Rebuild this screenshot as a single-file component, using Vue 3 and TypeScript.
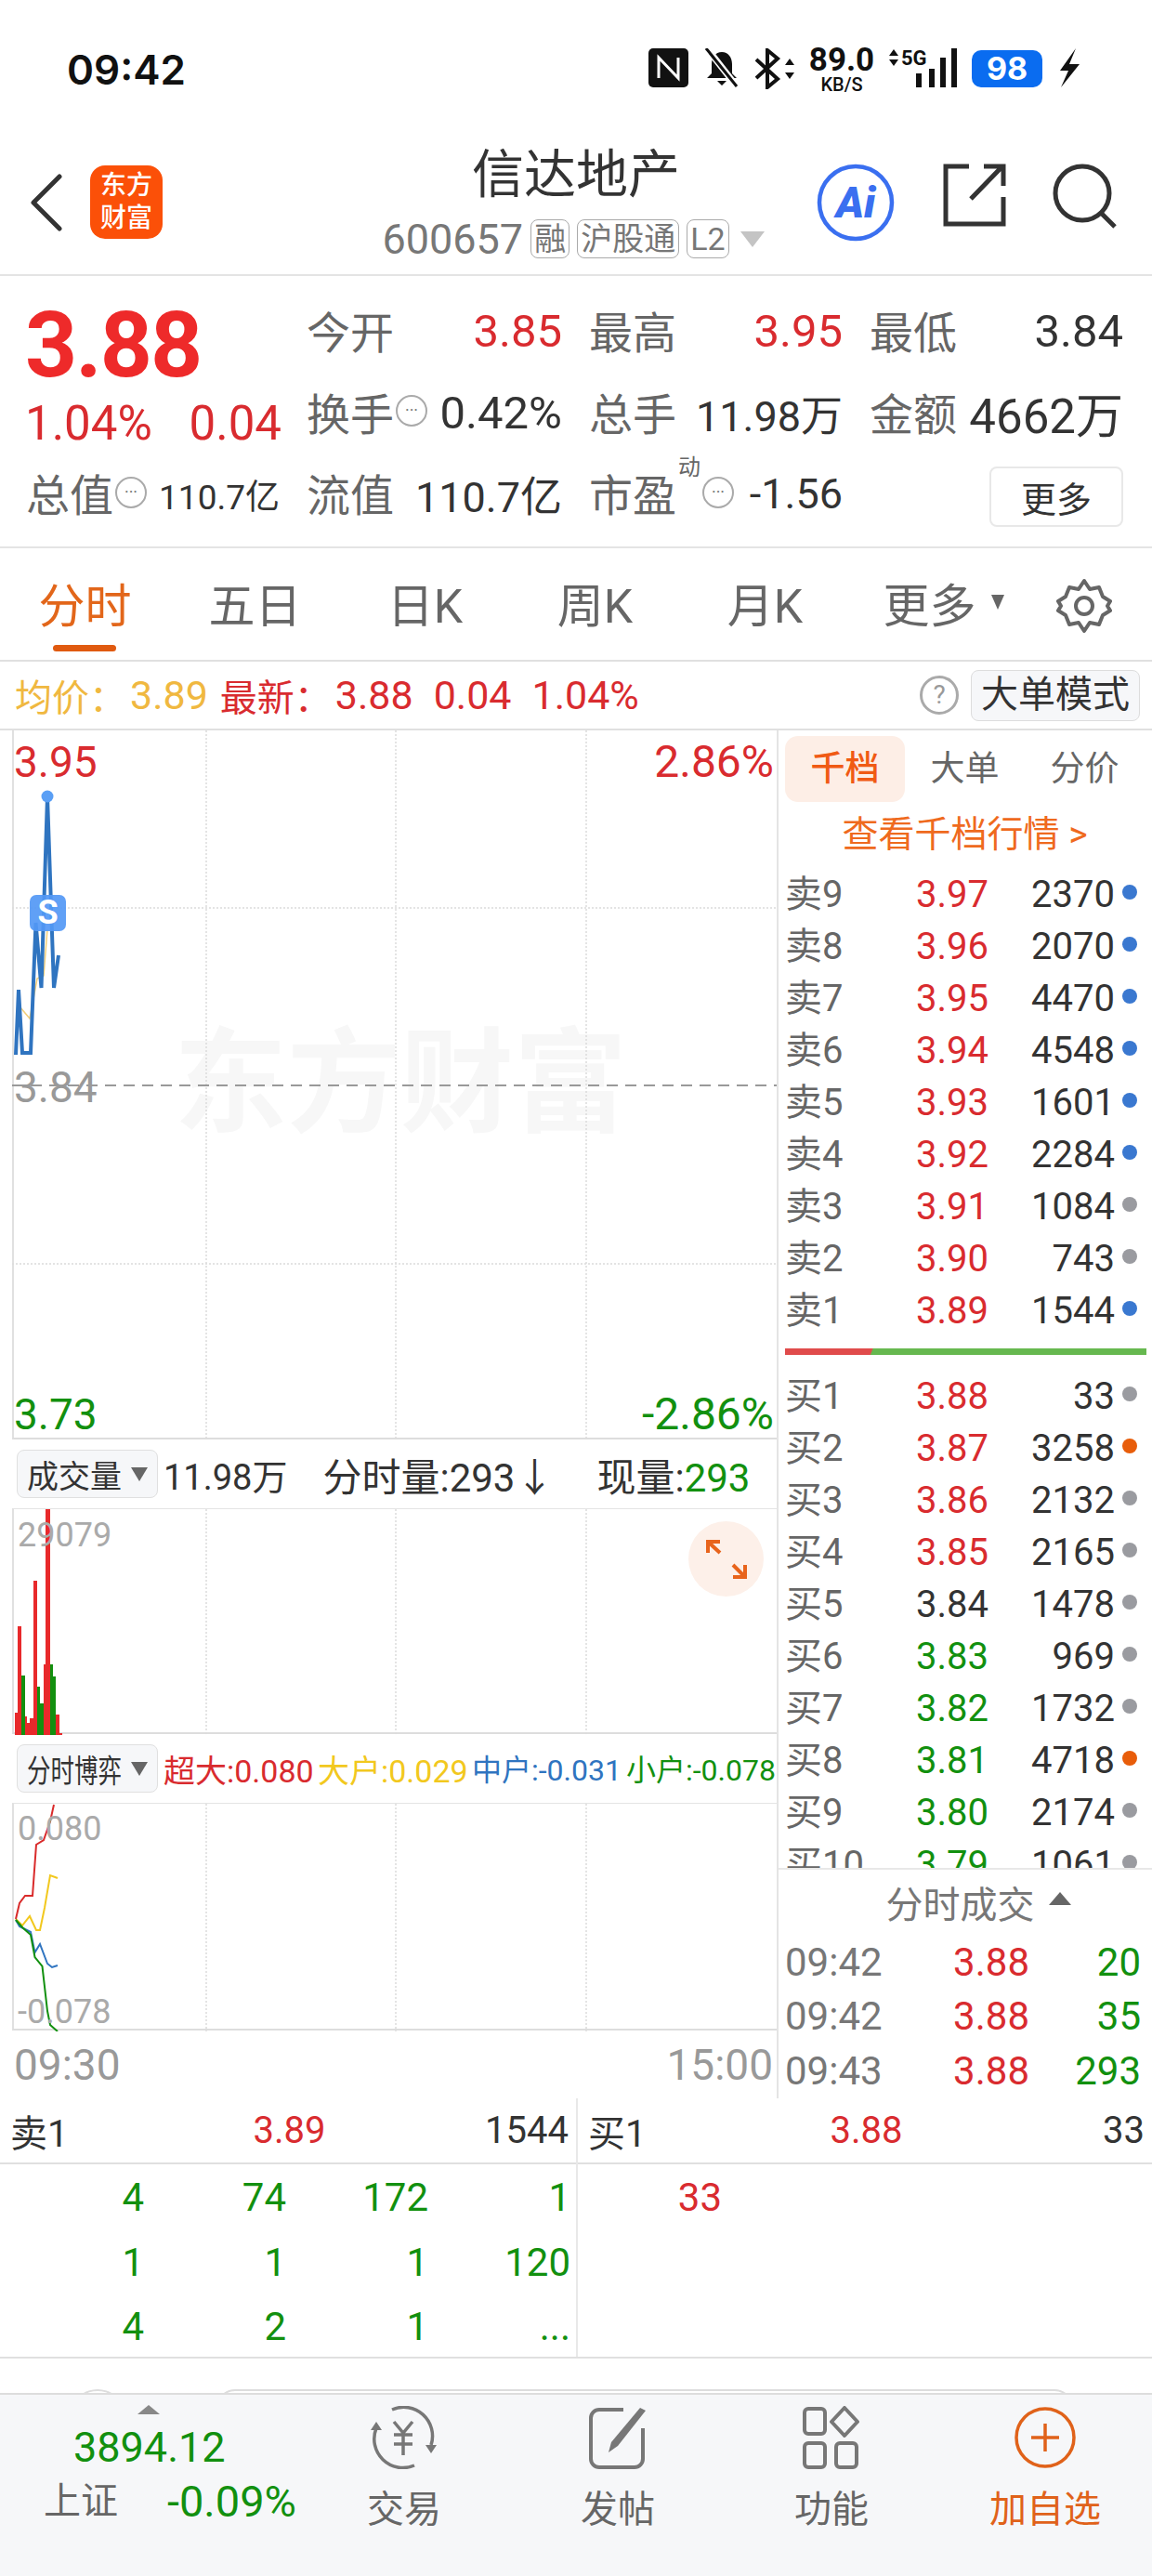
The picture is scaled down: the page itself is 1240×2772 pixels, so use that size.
<template>
  <div class="page">
    <div class="status">
      <span class="clock">09:42</span>
      <div class="status-icons">
        <svg width="43" height="42" viewBox="0 0 43 42"><rect width="43" height="42" rx="5" fill="#111" /><path d="M11 32V10l21 22V10" fill="none" stroke="#fff" stroke-width="3" /></svg>
        <svg width="40" height="42" viewBox="0 0 40 42"><path d="M20 4c-7 0-11 6-11 13v10l-5 5h32l-5-5V17c0-7-4-13-11-13zM15 35h10l-5 5z" fill="#111" /><path d="M4 0l32 41" stroke="#fff" stroke-width="7" /><path d="M3 0l33 41" stroke="#111" stroke-width="3" /></svg>
        <svg width="42" height="44" viewBox="0 0 42 44"><path d="M1 12l23 21-11 9V2l11 9L1 32" fill="none" stroke="#111" stroke-width="4" /><path d="M32 18l5-7 5 7zM32 26l5 7 5-7z" fill="#111" /></svg>
        <div class="speed"><b>89.0</b><small>KB/S</small></div>
        <svg width="73" height="42" viewBox="0 0 73 42"><path d="M0 8l5-7 5 7zM0 12l5 7 5-7z" fill="#111" /><text x="13" y="18" class="net">5G</text><rect x="29" y="27" width="6" height="15" fill="#111" /><rect x="43" y="22" width="6" height="20" fill="#111" /><rect x="55" y="10" width="6" height="32" fill="#111" /><rect x="67" y="0" width="6" height="42" fill="#111" /></svg>
        <div class="battery">98</div>
        <svg width="25" height="42" viewBox="0 0 25 42"><path d="M20 0L3 24h9L4 42l20-25H13z" fill="#111" /></svg>
      </div>
    </div>

    <header class="head">
      <div class="head-left">
        <svg width="35" height="62" viewBox="0 0 35 62"><path d="M32 3L4 31l28 28" fill="none" stroke="#333" stroke-width="5" stroke-linecap="round" stroke-linejoin="round" /></svg>
        <div class="logo">东方<br />财富</div>
      </div>
      <div class="head-mid">
        <div class="stock-name">信达地产</div>
        <div class="stock-sub">
          <span class="code">600657</span>
          <span class="tag">融</span>
          <span class="tag">沪股通</span>
          <span class="tag">L2</span>
          <i class="tri-down"></i>
        </div>
      </div>
      <div class="head-right">
        <svg width="84" height="84" viewBox="0 0 84 84"><circle cx="42" cy="42" r="39" fill="none" stroke="#3a6ff0" stroke-width="4.5" /><text x="42" y="58" text-anchor="middle" class="ai">Ai</text></svg>
        <svg width="68" height="68" viewBox="0 0 68 68"><path d="M28 3H3v62h62V36" fill="none" stroke="#333" stroke-width="5" /><path d="M30 38L63 4M44 3h21v21" fill="none" stroke="#333" stroke-width="5" /></svg>
        <svg width="70" height="70" viewBox="0 0 70 70"><circle cx="32" cy="32" r="29" fill="none" stroke="#333" stroke-width="5" /><path d="M52 53l15 15" stroke="#333" stroke-width="5" /></svg>
      </div>
    </header>

    <section class="quote">
      <div class="price-box">
        <div class="big-price">3.88</div>
        <div class="change"><span>1.04%</span><span>0.04</span></div>
      </div>
      <div class="cell"><span class="lbl">今开</span><span class="val red">3.85</span></div>
      <div class="cell"><span class="lbl">最高</span><span class="val red">3.95</span></div>
      <div class="cell"><span class="lbl">最低</span><span class="val">3.84</span></div>
      <div class="cell"><span class="lbl">换手<i class="dots"></i></span><span class="val">0.42%</span></div>
      <div class="cell"><span class="lbl">总手</span><span class="val mid">11.98万</span></div>
      <div class="cell"><span class="lbl">金额</span><span class="val big">4662万</span></div>
      <div class="cell"><span class="lbl">总值<i class="dots"></i></span><span class="val small">110.7亿</span></div>
      <div class="cell"><span class="lbl">流值</span><span class="val mid">110.7亿</span></div>
      <div class="cell"><span class="lbl">市盈<sup>动</sup><i class="dots"></i></span><span class="val mid">-1.56</span></div>
      <div class="cell end"><button class="more-btn">更多</button></div>
    </section>

    <nav class="tabs">
      <div v-for="(t, i) in periods" :key="t" :class="['tab', { active: i === 0, shifted: t === '更多' }]">
        {{ t }}<i v-if="t === '更多'" class="tri-small"></i>
      </div>
      <div class="tab gear">
        <svg width="60" height="60" viewBox="0 0 60 60"><path d="M30 3l6 9 10-2 4 10 8 5-3 5 3 5-8 5-4 10-10-2-6 9-6-9-10 2-4-10-8-5 3-5-3-5 8-5 4-10 10 2z" fill="none" stroke="#666" stroke-width="4" stroke-linejoin="round" /><circle cx="30" cy="30" r="9" fill="none" stroke="#666" stroke-width="4" /></svg>
      </div>
    </nav>

    <div class="info">
      <span class="yellow">均价：</span><span class="yellow num">3.89</span>
      <span class="red sp1">最新：</span><span class="red num">3.88</span>
      <span class="red sp2">0.04</span><span class="red sp2">1.04%</span>
      <span class="help">?</span>
      <button class="mode-btn">大单模式</button>
    </div>

    <div class="main">
      <div class="left">
        <div class="plot plot-price">
          <div class="watermark">东方财富</div>
          <svg width="824" height="763" viewBox="13 786 824 763">
            <path v-for="x in gridX" :key="x" :d="`M${x} 786V1549`" class="grid" />
            <path d="M13 977H836M13 1360H836" class="grid" />
            <path d="M13 1168H836" stroke="#999" stroke-width="2" stroke-dasharray="12 8" />
            <polyline points="21,1083 32,1096 40,1053 47,1050 51,1000" fill="none" stroke="#f3cf7a" stroke-width="1.5" />
            <polyline points="17,1135 20,1065 24,1133 33,1133 38.5,993 44.5,1063 51,857 58,1063 63,1028" fill="none" stroke="#2f74c0" stroke-width="4" />
            <circle cx="51" cy="857" r="6.5" fill="#5a9ff5" />
          </svg>
          <div class="sell-mark">S</div>
          <span class="mk tl red">3.95</span>
          <span class="mk tr red">2.86%</span>
          <span class="mk ml gray">3.84</span>
          <span class="mk bl green">3.73</span>
          <span class="mk br green">-2.86%</span>
        </div>

        <div class="bar-row">
          <div class="picker">成交量<i class="tri-down dark"></i></div>
          <span class="t-dark vol">11.98万</span>
          <span class="t-dark part">分时量:293↓</span>
          <span class="t-dark now">现量:<em class="green">293</em></span>
        </div>

        <div class="plot plot-vol">
          <svg width="824" height="243" viewBox="13 1624 824 243">
            <path v-for="x in gridX" :key="x" :d="`M${x} 1624V1867`" class="grid" />
            <rect v-for="b in volBars" :key="b.x" :x="b.x" :y="b.y" :width="b.w" :height="1867 - b.y" :fill="b.c" />
          </svg>
          <span class="mk-sm">29079</span>
          <div class="expand">
            <svg width="44" height="42" viewBox="0 0 44 42"><path d="M2 2L15 14M2 14V2h13M42 40L29 27M42 27v13H29" fill="none" stroke="#e8641c" stroke-width="4" /></svg>
          </div>
        </div>

        <div class="bar-row">
          <div class="picker"><span class="squeeze">分时博弈</span><i class="tri-down dark"></i></div>
          <div class="flows">
            <span class="red">超大:0.080</span>
            <span class="gold">大户:0.029</span>
            <span class="blue">中户:-0.031</span>
            <span class="green">小户:-0.078</span>
          </div>
        </div>

        <div class="plot plot-game">
          <svg width="824" height="245" viewBox="13 1941 824 245">
            <path v-for="x in gridX" :key="x" :d="`M${x} 1941V2186`" class="grid" />
            <polyline v-for="l in gameLines" :key="l.c" :points="l.p" fill="none" :stroke="l.c" stroke-width="2" />
          </svg>
          <span class="mk-sm top">0.080</span>
          <span class="mk-sm bottom">-0.078</span>
        </div>

        <div class="axis"><span>09:30</span><span>15:00</span></div>
      </div>

      <div class="right">
        <div class="book">
          <div class="book-tabs">
            <span class="on">千档</span><span>大单</span><span>分价</span>
          </div>
          <div class="book-link">查看千档行情 &gt;</div>
          <div v-for="r in sells" :key="r.l" class="book-row">
            <span class="b-l">{{ r.l }}</span>
            <span class="b-p" :class="r.cl">{{ r.p }}</span>
            <span class="b-q">{{ r.q }}</span>
            <i class="b-d" :class="r.d"></i>
          </div>
          <div class="ratio"></div>
          <div v-for="r in buys" :key="r.l" class="book-row">
            <span class="b-l">{{ r.l }}</span>
            <span class="b-p" :class="r.cl">{{ r.p }}</span>
            <span class="b-q">{{ r.q }}</span>
            <i class="b-d" :class="r.d"></i>
          </div>
        </div>
        <div class="trades">
          <div class="trades-head">分时成交<i class="tri-up"></i></div>
          <div v-for="(r, i) in trades" :key="i" class="trade">
            <span class="t-t">{{ r[0] }}</span>
            <span class="t-p red">{{ r[1] }}</span>
            <span class="t-v green">{{ r[2] }}</span>
          </div>
        </div>
      </div>
    </div>

    <div class="level">
      <div class="level-side">
        <div class="level-head">
          <span class="lh-l">卖1</span><span class="lh-p red">3.89</span><span class="lh-q">1544</span>
        </div>
        <div class="queue">
          <span v-for="(q, i) in sellQueue" :key="i" class="green">{{ q }}</span>
        </div>
      </div>
      <div class="level-side">
        <div class="level-head">
          <span class="lh-l">买1</span><span class="lh-p red">3.88</span><span class="lh-q">33</span>
        </div>
        <div class="queue">
          <span class="red">33</span>
        </div>
      </div>
    </div>

    <div class="peek">
      <i class="peek-dot"></i>
      <i class="peek-box"></i>
    </div>

    <footer class="tool">
      <div class="index">
        <i class="tri-up small"></i>
        <div class="index-val green">3894.12</div>
        <div class="index-row"><span>上证</span><span class="green pct">-0.09%</span></div>
      </div>
      <div class="tool-item">
        <svg width="76" height="68" viewBox="0 0 76 68"><path d="M25 4A31 31 0 0 1 67 42M49 64A31 31 0 0 1 8 24" fill="none" stroke="#777" stroke-width="3.5" /><path d="M61 42h12l-6 9zM2 26l6-9 6 9z" fill="#777" /><path d="M27 17l10 12 10-12M27 31h20M27 41h20M37 29v24" fill="none" stroke="#777" stroke-width="3.5" /></svg>
        <span>交易</span>
      </div>
      <div class="tool-item">
        <svg width="64" height="68" viewBox="0 0 64 68"><path d="M38 4H12a9 9 0 0 0-9 9v44a9 9 0 0 0 9 9h38a9 9 0 0 0 9-9V24" fill="none" stroke="#777" stroke-width="4" /><path d="M56 2l6 3-30 38-10 7 3-11z" fill="#777" /></svg>
        <span>发帖</span>
      </div>
      <div class="tool-item">
        <svg width="62" height="68" viewBox="0 0 62 68"><g fill="none" stroke="#777" stroke-width="4"><rect x="2" y="3" width="22" height="27" rx="4" /><path d="M45 2l14 15-14 15-14-15z" stroke-linejoin="round" /><rect x="2" y="40" width="22" height="26" rx="4" /><rect x="36" y="40" width="22" height="26" rx="4" /></g></svg>
        <span>功能</span>
      </div>
      <div class="tool-item on">
        <svg width="68" height="68" viewBox="0 0 68 68"><circle cx="34" cy="34" r="31" fill="none" stroke="#e0621a" stroke-width="3.5" /><path d="M34 19v30M19 34h30" stroke="#e0621a" stroke-width="3.5" /></svg>
        <span>加自选</span>
      </div>
    </footer>
  </div>
</template>

<script setup lang="ts">
interface BookRow {
  l: string;
  p: string;
  q: string;
  cl: string;
  d: string;
}

const periods = ['分时', '五日', '日K', '周K', '月K', '更多'];
const gridX = [222, 426, 631];

const mkRow = (l: string, p: string, q: string, d: string, cl = 'red'): BookRow => ({ l, p, q, d, cl });

const sells: BookRow[] = [
  mkRow('卖9', '3.97', '2370', 'blue-dot'),
  mkRow('卖8', '3.96', '2070', 'blue-dot'),
  mkRow('卖7', '3.95', '4470', 'blue-dot'),
  mkRow('卖6', '3.94', '4548', 'blue-dot'),
  mkRow('卖5', '3.93', '1601', 'blue-dot'),
  mkRow('卖4', '3.92', '2284', 'blue-dot'),
  mkRow('卖3', '3.91', '1084', 'gray-dot'),
  mkRow('卖2', '3.90', '743', 'gray-dot'),
  mkRow('卖1', '3.89', '1544', 'blue-dot'),
];

const buys: BookRow[] = [
  mkRow('买1', '3.88', '33', 'gray-dot'),
  mkRow('买2', '3.87', '3258', 'orange-dot'),
  mkRow('买3', '3.86', '2132', 'gray-dot'),
  mkRow('买4', '3.85', '2165', 'gray-dot'),
  mkRow('买5', '3.84', '1478', 'gray-dot', 'dark'),
  mkRow('买6', '3.83', '969', 'gray-dot', 'green'),
  mkRow('买7', '3.82', '1732', 'gray-dot', 'green'),
  mkRow('买8', '3.81', '4718', 'orange-dot', 'green'),
  mkRow('买9', '3.80', '2174', 'gray-dot', 'green'),
  mkRow('买10', '3.79', '1061', 'gray-dot', 'green'),
];

const trades = [
  ['09:42', '3.88', '20'],
  ['09:42', '3.88', '35'],
  ['09:43', '3.88', '293'],
];

const sellQueue = ['4', '74', '172', '1', '1', '1', '1', '120', '4', '2', '1', '...'];

const RED = '#e8292b';
const GRN = '#12900f';
const volBars = [
  { x: 16, y: 1843, w: 3, c: RED },
  { x: 19, y: 1750, w: 4, c: RED },
  { x: 23, y: 1803, w: 4, c: GRN },
  { x: 27, y: 1847, w: 2, c: RED },
  { x: 29, y: 1854, w: 3, c: RED },
  { x: 32, y: 1849, w: 4, c: RED },
  { x: 36, y: 1701, w: 4, c: RED },
  { x: 40, y: 1815, w: 3, c: GRN },
  { x: 43, y: 1833, w: 4, c: GRN },
  { x: 47, y: 1791, w: 2, c: RED },
  { x: 49, y: 1624, w: 5, c: RED },
  { x: 54, y: 1791, w: 3, c: GRN },
  { x: 57, y: 1804, w: 3, c: GRN },
  { x: 60, y: 1845, w: 4, c: RED },
  { x: 64, y: 1865, w: 3, c: RED },
];

const gameLines = [
  { c: '#f2c81e', p: '17,2065 24,2072 32,2062 39,2077 43,2077 48,2053 54,2018 62,2021' },
  { c: '#2f74c0', p: '17,2066 21,2073 33,2079 37.5,2101 43,2092 51,2113 56,2117 62,2115' },
  { c: '#d92b2b', p: '17,2065 21,2048 27,2040 35,2040 39,1985 47,1980 54,1960 58,1942' },
  { c: '#12900f', p: '17,2066 24,2074 33,2082 37.5,2106 45.5,2116 51,2164 54,2179 62,2186' },
];
</script>

<style>
html,
body {
  margin: 0;
  background: #fff;
}
</style>

<style scoped>
.page {
  width: 1240px;
  height: 2772px;
  overflow: hidden;
  font-family: Roboto, "Noto Sans CJK SC", sans-serif;
  color: #333;
  background: #fff;
}

.red { color: #d92b2f; }
.green { color: #12900f; }
.gray { color: #999; }
.gold { color: #f2c81e; }
.blue { color: #2f74c0; }
.dark { color: #333; }
.yellow { color: #f0b840; }

/* status bar */
.status {
  height: 148px;
  box-sizing: border-box;
  padding: 52px 77px 0 72px;
  display: flex;
  justify-content: space-between;
  align-items: flex-start;
}

.clock {
  font-family: Inter, sans-serif;
  font-weight: 600;
  font-size: 44px;
  line-height: 46px;
  color: #111;
}

.status-icons {
  display: flex;
  align-items: flex-start;
  gap: 16px;
}

.speed {
  width: 70px;
  display: flex;
  flex-direction: column;
  align-items: center;
  color: #111;
  margin-top: -3px;
}

.speed b {
  font-size: 35px;
  line-height: 32px;
}

.speed small {
  font-size: 20px;
  line-height: 20px;
  font-weight: 500;
}

.net {
  font-family: Roboto, sans-serif;
  font-size: 22px;
  font-weight: 700;
  fill: #111;
}

.battery {
  width: 76px;
  height: 40px;
  margin-top: 2px;
  background: #0a6cf0;
  border-radius: 10px;
  color: #fff;
  font-family: Inter, sans-serif;
  font-weight: 700;
  font-size: 34px;
  line-height: 40px;
  text-align: center;
}

/* header */
.head {
  height: 149px;
  box-sizing: border-box;
  border-bottom: 2px solid #e4e4e4;
  display: grid;
  grid-template-columns: 1fr auto 1fr;
}

.head-left {
  display: flex;
  align-items: center;
  gap: 30px;
  padding: 30px 0 0 32px;
  height: 79px;
}

.logo {
  width: 78px;
  height: 79px;
  border-radius: 16px;
  background: #fb5008;
  color: #fff;
  font-size: 28px;
  font-weight: 500;
  line-height: 35px;
  text-align: center;
  box-sizing: border-box;
  padding-top: 4px;
}

.head-mid {
  padding-top: 8px;
  text-align: center;
}

.stock-name {
  font-size: 56px;
  line-height: 64px;
  color: #333;
}

.stock-sub {
  margin: 16px 0 0 -6px;
  display: flex;
  align-items: center;
  gap: 8px;
  height: 42px;
}

.code {
  font-size: 45px;
  color: #777;
}

.tag {
  font-size: 34px;
  line-height: 40px;
  padding: 0 3px;
  color: #777;
  border: 1px solid #aaa;
  border-radius: 8px;
}

.tri-down {
  display: inline-block;
  width: 0;
  height: 0;
  margin-left: 4px;
  border-left: 13px solid transparent;
  border-right: 13px solid transparent;
  border-top: 17px solid #c4c4c4;
}

.tri-down.dark {
  border-left-width: 9px;
  border-right-width: 9px;
  border-top: 15px solid #666;
  margin-left: 10px;
}

.head-right {
  display: flex;
  justify-content: flex-end;
  align-items: flex-start;
  gap: 50px;
  padding: 28px 37px 0 0;
}

.head-right svg:first-child {
  margin-right: 2px;
}

.ai {
  font-family: Roboto, sans-serif;
  font-weight: 900;
  font-style: italic;
  font-size: 46px;
  fill: #3a6ff0;
}

/* quote block */
.quote {
  height: 293px;
  box-sizing: border-box;
  border-bottom: 2px solid #e4e4e4;
  padding: 16px 30px 0;
  display: grid;
  grid-template-columns: 271px 273px 271px 271px;
  grid-auto-rows: 87.5px;
  column-gap: 31px;
}

.price-box {
  grid-row: 1 / span 2;
  grid-column: 1;
}

.big-price {
  margin: 9px 0 0 -3px;
  font-size: 98px;
  line-height: 100px;
  font-weight: 700;
  letter-spacing: -2px;
  color: #ee2a2a;
}

.change {
  margin-top: 4px;
  display: flex;
  justify-content: space-between;
  font-size: 51px;
  line-height: 60px;
  color: #d92b2f;
  width: 276px;
  margin-left: -3px;
}

.cell {
  display: flex;
  align-items: center;
  justify-content: space-between;
  white-space: nowrap;
}

.cell.end {
  justify-content: flex-end;
}

.lbl {
  font-size: 47px;
  color: #666;
  display: flex;
  align-items: center;
  position: relative;
  margin: -4px 0 0 -2px;
}

.lbl sup {
  font-size: 24px;
  line-height: 24px;
  align-self: flex-start;
  margin: -4px 0 0 2px;
}

.dots {
  width: 30px;
  height: 30px;
  border: 2px solid #aaa;
  border-radius: 50%;
  margin-left: 2px;
  display: flex;
  align-items: center;
  justify-content: center;
}

.dots::after {
  content: "···";
  font-size: 18px;
  font-style: normal;
  line-height: 1;
  color: #777;
}

.val {
  font-size: 49px;
}

.val.mid {
  font-size: 45px;
}

.val.big {
  font-size: 51px;
}

.val.small {
  font-size: 37px;
}

.more-btn {
  width: 144px;
  height: 65px;
  padding: 0;
  margin-top: 6px;
  font: inherit;
  font-size: 38px;
  color: #333;
  background: #fff;
  border: 2px solid #e8e8e8;
  border-radius: 8px;
}

/* period tabs */
.tabs {
  height: 122px;
  box-sizing: border-box;
  border-bottom: 2px solid #e0e0e0;
  display: grid;
  grid-template-columns: repeat(6, 183px) 1fr;
}

.tab {
  position: relative;
  display: flex;
  align-items: center;
  justify-content: center;
  font-size: 50px;
  color: #666;
  padding-bottom: 4px;
  box-sizing: border-box;
}

.tab.active {
  color: #e2661a;
}

.tab.active::after {
  content: "";
  position: absolute;
  left: 57px;
  bottom: 9px;
  width: 68px;
  height: 7px;
  border-radius: 4px;
  background: #e05a10;
}

.tab.shifted {
  padding-left: 18px;
}

.tab.gear {
  padding: 4px 4px 0 0;
}

.tri-small {
  margin-left: 16px;
  width: 0;
  height: 0;
  border-left: 7px solid transparent;
  border-right: 7px solid transparent;
  border-top: 16px solid #666;
}

/* info row */
.info {
  height: 74px;
  box-sizing: border-box;
  border-bottom: 2px solid #e0e0e0;
  padding: 0 13px 0 16px;
  display: flex;
  align-items: center;
  font-size: 40px;
  white-space: nowrap;
}

.num {
  font-size: 43px;
  margin-left: 4px;
}

.sp1 {
  margin-left: 13px;
}

.sp2 {
  margin-left: 22px;
  font-size: 43px;
}

.help {
  margin-left: auto;
  width: 36px;
  height: 36px;
  border: 3px solid #aaa;
  border-radius: 50%;
  color: #999;
  font-size: 28px;
  line-height: 36px;
  text-align: center;
}

.mode-btn {
  margin-left: 13px;
  width: 182px;
  height: 55px;
  padding: 0;
  font: inherit;
  font-size: 40px;
  line-height: 50px;
  color: #333;
  background: #f6f7f9;
  border: 1px solid #ddd;
  border-radius: 8px;
}

/* charts */
.main {
  height: 1472px;
  display: flex;
  overflow: hidden;
}

.left {
  width: 838px;
  box-sizing: border-box;
  border-right: 2px solid #e4e4e4;
  display: flex;
  flex-direction: column;
}

.plot {
  position: relative;
  margin-left: 13px;
  border-left: 2px solid #e0e0e0;
  box-sizing: border-box;
  flex-shrink: 0;
}

.plot svg {
  display: block;
}

.plot-price {
  height: 763px;
  border-bottom: 2px solid #ddd;
}

.plot-vol {
  height: 243px;
  border-top: 1px solid #e4e4e4;
  border-bottom: 2px solid #ddd;
}

.plot-game {
  height: 245px;
  border-top: 1px solid #e4e4e4;
  border-bottom: 2px solid #ddd;
}

.plot > svg {
  position: absolute;
  left: -2px;
  top: 0;
}

.grid {
  stroke: #dcdcdc;
  stroke-width: 1.5;
  stroke-dasharray: 2 2;
  fill: none;
}

.watermark {
  position: absolute;
  left: 172px;
  top: 320px;
  font-size: 122px;
  line-height: 122px;
  font-weight: 700;
  color: #f7f7f7;
  white-space: nowrap;
}

.sell-mark {
  position: absolute;
  left: 17px;
  top: 177px;
  width: 39px;
  height: 39px;
  border-radius: 7px;
  background: rgba(82, 152, 245, 0.92);
  color: #fff;
  font-size: 36px;
  font-weight: 700;
  line-height: 39px;
  text-align: center;
}

.mk {
  position: absolute;
  font-size: 46px;
  line-height: 50px;
}

.mk.tr,
.mk.br {
  font-size: 48px;
}

.mk.tl { left: 0; top: 9px; }
.mk.tr { right: 3px; top: 9px; }
.mk.ml { left: 0; top: 359px; }
.mk.bl { left: 0; bottom: 0; }
.mk.br { right: 3px; bottom: 0; }

.mk-sm {
  position: absolute;
  left: 4px;
  top: 8px;
  font-size: 36px;
  line-height: 40px;
  color: #aaa;
}

.mk-sm.top {
  top: 7px;
}

.mk-sm.bottom {
  top: 204px;
}

.expand {
  position: absolute;
  left: 726px;
  top: 13px;
  width: 81px;
  height: 81px;
  border-radius: 50%;
  background: #fdf0e9;
  display: flex;
  align-items: center;
  justify-content: center;
}

.bar-row {
  height: 74px;
  flex-shrink: 0;
  display: flex;
  align-items: center;
  padding-left: 18px;
  white-space: nowrap;
  font-size: 38px;
}

.picker {
  width: 152px;
  height: 52px;
  box-sizing: border-box;
  padding-left: 10px;
  display: flex;
  align-items: center;
  font-size: 34px;
  color: #333;
  background: #f6f7f9;
  border: 1px solid #e0e0e0;
  border-radius: 8px;
  flex-shrink: 0;
}

.squeeze {
  width: 102px;
  font-size: 34px;
  transform: scaleX(0.75);
  transform-origin: left center;
}

.t-dark {
  color: #333;
}

.t-dark em {
  font-style: normal;
}

.vol { margin-left: 6px; }
.part { margin-left: 38px; font-size: 42px; }
.now { margin-left: 46px; font-size: 42px; }

.flows {
  display: flex;
  margin-left: 6px;
  gap: 6px;
  font-size: 34px;
}

.flows span {
  width: 160px;
}

.flows span:nth-child(n + 3) {
  font-size: 32px;
}

.axis {
  flex: 1;
  display: flex;
  align-items: center;
  justify-content: space-between;
  padding: 0 4px 0 15px;
  font-size: 46px;
  color: #999;
}

/* order book */
.right {
  width: 402px;
  display: flex;
  flex-direction: column;
}

.book {
  height: 1226px;
  box-sizing: border-box;
  overflow: hidden;
  border-bottom: 2px solid #e8e8e8;
  padding: 6px 0 0 7px;
}

.book-tabs {
  display: grid;
  grid-template-columns: repeat(3, 129px);
  height: 71px;
  font-size: 37px;
  line-height: 71px;
  text-align: center;
  color: #666;
}

.book-tabs .on {
  background: #fdeee6;
  border-radius: 14px;
  color: #f05a14;
  font-weight: 500;
}

.book-link {
  height: 72px;
  line-height: 70px;
  text-align: center;
  font-size: 39px;
  color: #ef6a1e;
  padding-right: 8px;
}

.book-row {
  height: 56px;
  display: grid;
  grid-template-columns: 91px 128px 136px 32px;
  align-items: center;
  font-size: 40px;
  line-height: 56px;
}

.b-l {
  color: #666;
  white-space: nowrap;
}

.b-p,
.b-q {
  text-align: right;
}

.b-d {
  width: 16px;
  height: 16px;
  border-radius: 50%;
  justify-self: center;
  margin-top: -6px;
}

.blue-dot { background: #3a78d0; }
.gray-dot { background: #9a9ba0; }
.orange-dot { background: #e85d0a; }

.ratio {
  margin: 12px 6px 17px 0;
  height: 7px;
  background: linear-gradient(112deg, #e04b4b 24%, #66b84f 24.3%);
}

.trades-head {
  height: 70px;
  display: flex;
  align-items: center;
  justify-content: center;
  font-size: 40px;
  color: #777;
  padding-left: 28px;
}

.tri-up {
  width: 0;
  height: 0;
  margin-left: 15px;
  margin-bottom: 8px;
  border-left: 12px solid transparent;
  border-right: 12px solid transparent;
  border-bottom: 14px solid #666;
}

.tri-up.small {
  display: block;
  margin: 0 auto 0;
  border-left-width: 12px;
  border-right-width: 12px;
  border-bottom: 10px solid #888;
}

.trade {
  height: 58.5px;
  display: grid;
  grid-template-columns: 149px 114px 120px;
  align-items: center;
  padding-left: 7px;
  font-size: 42px;
}

.t-t {
  color: #777;
}

.t-p,
.t-v {
  text-align: right;
}

/* level one queue */
.level {
  display: flex;
  border-bottom: 2px solid #e0e0e0;
  height: 280px;
  box-sizing: border-box;
}

.level-side {
  width: 620px;
  position: relative;
  box-sizing: border-box;
}

.level-side + .level-side {
  border-left: 2px solid #e8e8e8;
}

.level-head {
  height: 71px;
  box-sizing: border-box;
  border-bottom: 2px solid #e0e0e0;
  display: grid;
  grid-template-columns: 1fr 1fr 1fr;
  align-items: center;
  padding: 0 8px 0 11px;
  font-size: 40px;
  color: #333;
}

.lh-p {
  text-align: center;
}

.lh-q {
  text-align: right;
}

.queue {
  display: grid;
  grid-template-columns: repeat(4, 153px);
  grid-auto-rows: 69.5px;
  padding: 1px 0 0 2px;
  font-size: 42px;
  line-height: 69.5px;
  text-align: right;
}

/* strip behind the toolbar */
.peek {
  height: 37px;
  position: relative;
  overflow: hidden;
}

.peek-dot,
.peek-box {
  position: absolute;
  top: 33px;
  height: 40px;
  border: 2px solid #ddd;
  box-sizing: border-box;
}

.peek-dot {
  left: 80px;
  width: 50px;
  border-radius: 50%;
}

.peek-box {
  left: 233px;
  width: 922px;
  border-radius: 20px;
}

/* bottom toolbar */
.tool {
  height: 199px;
  box-sizing: border-box;
  background: #f6f7f9;
  border-top: 2px solid #ddd;
  display: grid;
  grid-template-columns: 320px repeat(4, 230px);
}

.index {
  padding-top: 11px;
}

.index .tri-up {
  margin-left: 148px;
}

.index-val {
  margin-top: 6px;
  padding-left: 79px;
  font-size: 45px;
  line-height: 60px;
}

.index-row {
  display: flex;
  justify-content: space-between;
  align-items: center;
  padding: 0 0 0 47px;
  width: 272px;
  font-size: 40px;
  line-height: 56px;
  color: #666;
}

.pct {
  font-size: 47px;
}

.tool-item {
  display: flex;
  flex-direction: column;
  align-items: center;
  padding-top: 12px;
  font-size: 40px;
  line-height: 56px;
  color: #666;
}

.tool-item span {
  margin-top: 16px;
}

.tool-item.on {
  color: #e0621a;
}
</style>
